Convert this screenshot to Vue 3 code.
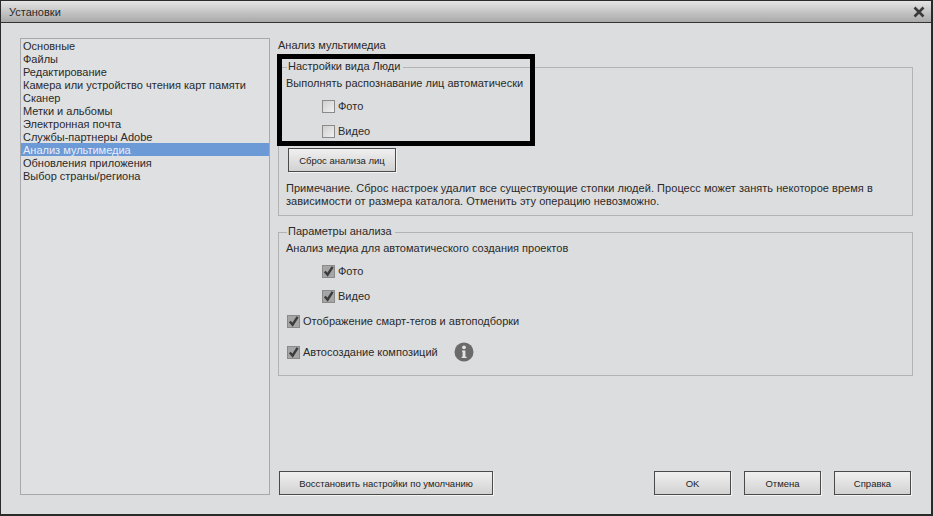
<script setup>
const items = ['Основные','Файлы','Редактирование','Камера или устройство чтения карт памяти','Сканер','Метки и альбомы','Электронная почта','Службы-партнеры Adobe','Анализ мультимедиа','Обновления приложения','Выбор страны/региона']
</script>

<template>
  <div class="win">
    <header class="title">
      <span>Установки</span>
      <svg class="close" width="12" height="12" viewBox="0 0 12 12"><path d="M1.5 1.5l9 9M10.5 1.5l-9 9" stroke="#3a3a3a" stroke-width="2.6" fill="none"/></svg>
    </header>
    <div class="body">
      <ul class="list">
        <li v-for="(it,i) in items" :key="it" :class="{sel:i===8}">{{ it }}</li>
      </ul>
      <main class="main">
        <div class="heading">Анализ мультимедиа</div>
        <section class="group g1">
          <div class="legend">Настройки вида Люди</div>
          <div class="lead">Выполнять распознавание лиц автоматически</div>
          <label class="chk sub r1"><i class="box"></i>Фото</label>
          <label class="chk sub r2"><i class="box"></i>Видео</label>
          <button class="btn reset">Сброс анализа лиц</button>
          <p class="note">Примечание. Сброс настроек удалит все существующие стопки людей. Процесс может занять некоторое время в зависимости от размера каталога. Отменить эту операцию невозможно.</p>
        </section>
        <section class="group g2">
          <div class="legend">Параметры анализа</div>
          <div class="lead">Анализ медиа для автоматического создания проектов</div>
          <label class="chk sub r1"><i class="box on"><svg viewBox="0 0 12 12" width="11" height="11"><path d="M2 6l3 3.5L10.5 1" stroke="#3c3c3c" stroke-width="2.7" fill="none"/></svg></i>Фото</label>
          <label class="chk sub r2"><i class="box on"><svg viewBox="0 0 12 12" width="11" height="11"><path d="M2 6l3 3.5L10.5 1" stroke="#3c3c3c" stroke-width="2.7" fill="none"/></svg></i>Видео</label>
          <label class="chk r2"><i class="box on"><svg viewBox="0 0 12 12" width="11" height="11"><path d="M2 6l3 3.5L10.5 1" stroke="#3c3c3c" stroke-width="2.7" fill="none"/></svg></i>Отображение смарт-тегов и автоподборки</label>
          <div class="row-info">
            <label class="chk"><i class="box on"><svg viewBox="0 0 12 12" width="11" height="11"><path d="M2 6l3 3.5L10.5 1" stroke="#3c3c3c" stroke-width="2.7" fill="none"/></svg></i>Автосоздание композиций</label>
            <svg class="info" width="20" height="20" viewBox="0 0 20 20"><circle cx="10" cy="10" r="9.5" fill="#6a6a6a"/><circle cx="10" cy="5.3" r="1.9" fill="#e4e4e4"/><path d="M8 8.5h3.4v6.2h1.2V16H7.6v-1.3h1V9.8H8z" fill="#e4e4e4"/></svg>
          </div>
        </section>
        <footer class="foot">
          <button class="btn restore">Восстановить настройки по умолчанию</button>
          <div class="actions">
            <button class="btn act">OK</button>
            <button class="btn act">Отмена</button>
            <button class="btn act">Справка</button>
          </div>
        </footer>
      </main>
      <div class="mark"></div>
    </div>
  </div>
</template>

<style>
html,body{margin:0;background:#dcdde0}
</style>
<style scoped>
.win{position:relative;width:933px;height:516px;box-sizing:border-box;border:solid #2a2a2a;border-width:1px 2px 2px 1px;background:#dcddde;font:11px "Liberation Sans",sans-serif;color:#2a2a2a;overflow:hidden;display:flex;flex-direction:column}
.title{height:21px;flex:none;background:linear-gradient(#e4e4e4,#a9a9a9);border-bottom:1px solid #333;display:flex;align-items:center;justify-content:space-between;padding:0 6px 0 8px}
.title span{padding-top:1px}
.body{flex:1;display:flex;padding:15px 0 0 19px;position:relative;min-height:0}
.list{margin:0;padding:0;list-style:none;width:248px;height:455px;border:1px solid #a8a8aa;background:#dfe0e2;flex:none}
.list li{height:13px;line-height:15px;padding-left:2px;white-space:nowrap}
.list li.sel{background:#6c9ad7;color:#e8eef8}
.main{margin-left:8px;width:635px;display:flex;flex-direction:column}
.heading{line-height:14px}
.group{position:relative;border:1px solid #b3b3b3;box-sizing:border-box;padding:0 8px;margin-top:15px}
.legend{position:absolute;top:-9px;left:8px;background:#dcddde;padding:0 3px 0 1px;line-height:14px}
.lead{margin:8px 0 0 -1px;line-height:14px}
.g1{height:149px}
.g2{height:144px;margin-top:16px}
.chk{display:flex;align-items:center;gap:3px;line-height:14px}
.sub{margin-left:35px}
.r1{margin-top:9px}
.r2{margin-top:11px}
.box{display:flex;align-items:center;justify-content:center;width:11px;height:11px;border:1px solid #8a8a8a;background:linear-gradient(135deg,#cfcfcf,#f1f1f1);flex:none}
.box.on{background:#a6a6a6}
.btn{display:block;font:inherit;font-size:9.5px;color:#222;border:1px solid #4a4a4a;background:linear-gradient(#f0f0f0,#d2d2d2);padding:0;box-shadow:1px 1px 0 #f4f4f4;box-sizing:border-box}
.reset{width:108px;height:24px;margin:10px 0 0 1px}
.note{margin:10px 0 0 -1px;line-height:13px;width:610px;letter-spacing:.04px}
.row-info{display:flex;align-items:center;margin-top:14px}
.info{margin-left:16px}
.foot{margin-top:95px;display:flex;justify-content:space-between;padding:0 2px 0 1px}
.restore{width:214px;height:24px}
.actions{display:flex;gap:13px}
.act{width:77px;height:24px}
.mark{position:absolute;left:276px;top:31px;width:248px;height:82px;border:5px solid #000}
</style>
